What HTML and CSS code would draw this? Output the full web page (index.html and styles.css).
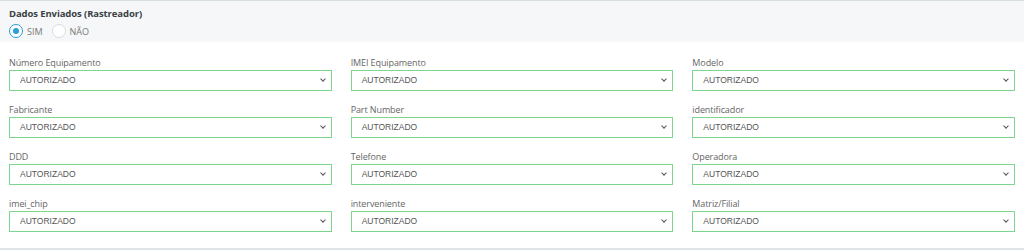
FILE: index.html
```html
<!DOCTYPE html>
<html lang="pt-BR">
  <head>
    <meta charset="utf-8" />
    <title>Dados Enviados</title>
    <link rel="stylesheet" href="styles.css">
  </head>
  <body>
    <div class="panel">
      <div class="panel-header">
        <div class="panel-title">Dados Enviados (Rastreador)</div>
        <div class="radios">
          <label class="radio"><span class="dot checked"></span>SIM</label>
          <label class="radio"><span class="dot"></span>NÃO</label>
        </div>
      </div>

      <div class="fields">
        <div class="field">
          <label>Número Equipamento</label>
          <div class="select">AUTORIZADO<span class="chev"></span></div>
        </div>
        <div class="field">
          <label>IMEI Equipamento</label>
          <div class="select">AUTORIZADO<span class="chev"></span></div>
        </div>
        <div class="field">
          <label>Modelo</label>
          <div class="select">AUTORIZADO<span class="chev"></span></div>
        </div>

        <div class="field">
          <label>Fabricante</label>
          <div class="select">AUTORIZADO<span class="chev"></span></div>
        </div>
        <div class="field">
          <label>Part Number</label>
          <div class="select">AUTORIZADO<span class="chev"></span></div>
        </div>
        <div class="field">
          <label>identificador</label>
          <div class="select">AUTORIZADO<span class="chev"></span></div>
        </div>

        <div class="field">
          <label>DDD</label>
          <div class="select">AUTORIZADO<span class="chev"></span></div>
        </div>
        <div class="field">
          <label>Telefone</label>
          <div class="select">AUTORIZADO<span class="chev"></span></div>
        </div>
        <div class="field">
          <label>Operadora</label>
          <div class="select">AUTORIZADO<span class="chev"></span></div>
        </div>

        <div class="field">
          <label>imei_chip</label>
          <div class="select">AUTORIZADO<span class="chev"></span></div>
        </div>
        <div class="field">
          <label>interveniente</label>
          <div class="select">AUTORIZADO<span class="chev"></span></div>
        </div>
        <div class="field">
          <label>Matriz/Filial</label>
          <div class="select">AUTORIZADO<span class="chev"></span></div>
        </div>
      </div>
    </div>
  </body>
</html>
```

FILE: styles.css
```css
body {
  margin: 0;
  background: #fff;
  font-family: "Open Sans", "Noto Sans", sans-serif;
  color: #555;
}

.panel {
  border-top: 1px solid #d6dee2;
  border-bottom: 2px solid #dfe3e6;
  height: 250px;
  box-sizing: border-box;
}

.panel-header {
  background: #f5f7f8;
  padding: 6px 9px 0;
  height: 41px;
  box-sizing: border-box;
}

.panel-title {
  font-size: 9.5px;
  font-weight: 700;
  color: #3a3f44;
  letter-spacing: -0.1px;
  line-height: 14px;
}

.radios {
  display: flex;
  gap: 9px;
  margin-top: 3px;
}

.radio {
  display: flex;
  align-items: center;
  gap: 4px;
  font-size: 9px;
  color: #777;
}

.dot {
  width: 14px;
  height: 14px;
  border-radius: 50%;
  border: 1px solid #d9dde0;
  background: #fff;
  box-sizing: border-box;
  position: relative;
}

.dot.checked {
  border-color: #2a9fd8;
}

.dot.checked::after {
  content: "";
  position: absolute;
  left: 3px;
  top: 3px;
  width: 6px;
  height: 6px;
  border-radius: 50%;
  background: #2a9fd8;
}

.fields {
  display: grid;
  grid-template-columns: repeat(3, 1fr);
  column-gap: 19px;
  row-gap: 13px;
  padding: 15px 9px 0;
}

.field label {
  display: block;
  font-size: 9px;
  color: #666;
  line-height: 11px;
  margin-bottom: 2px;
  letter-spacing: -0.1px;
}

.select {
  height: 21px;
  border: 1px solid #7dd68e;
  box-sizing: border-box;
  font-family: "Liberation Sans", Arial, sans-serif;
  font-size: 8.5px;
  color: #555;
  padding-left: 10px;
  line-height: 19px;
  position: relative;
}

.chev {
  position: absolute;
  right: 6px;
  top: 6px;
  width: 3px;
  height: 3px;
  border-right: 1.5px solid #555;
  border-bottom: 1.5px solid #555;
  transform: rotate(45deg);
}
```
